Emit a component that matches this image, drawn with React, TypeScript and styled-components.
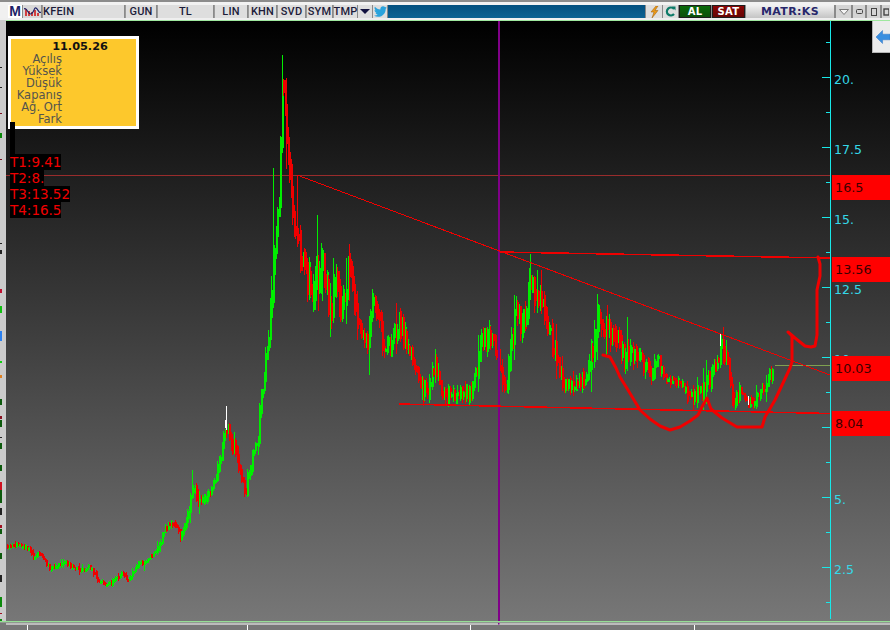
import React from "react";
import styled, { createGlobalStyle } from "styled-components";
import { FaTwitter } from "react-icons/fa";

const GlobalStyle = createGlobalStyle`
  html, body {
    margin: 0;
    padding: 0;
    width: 890px;
    height: 630px;
    overflow: hidden;
    background: #777;
  }
`;

const Page = styled.div`
  width: 890px;
  height: 630px;
  display: flex;
  flex-direction: column;
  overflow: hidden;
`;

const TopStrip = styled.div`
  height: 3px;
  flex: none;
  background: #f2f2f2;
  border-top: 2px solid #8c8c8c;
`;

const Toolbar = styled.div`
  height: 13px;
  flex: none;
  display: flex;
  align-items: stretch;
  gap: 1px;
  padding-left: 8px;
  background: #8a8a8a;
  box-shadow: inset 8px 0 0 #f0f0f0;
`;

const ToolButton = styled.div<{ $w: number; $left?: boolean }>`
  width: ${(p) => p.$w}px;
  flex: none;
  display: flex;
  align-items: center;
  justify-content: ${(p) => (p.$left ? "flex-start" : "center")};
  box-sizing: border-box;
  background: #dedede;
  border-left: 1px solid #9a9a9a;
  color: #1c1c3a;
  font: 500 11px/13px Roboto, "Liberation Sans", sans-serif;
  letter-spacing: 0.2px;
`;

const LogoButton = styled.div`
  width: 14px;
  flex: none;
  background: #fff;
  color: #1c1f66;
  font: 700 14px/13px "Liberation Sans", sans-serif;
  text-align: center;
`;

const IconButton = styled.div<{ $w: number; $bg?: string }>`
  width: ${(p) => p.$w}px;
  flex: none;
  display: flex;
  align-items: center;
  justify-content: center;
  background: ${(p) => p.$bg ?? "#dedede"};
  svg {
    display: block;
  }
`;

const NewsStrip = styled.div`
  flex: 1;
  background: linear-gradient(#04507f, #0b6293);
`;

const TradeButton = styled.div<{ $w: number; $bg: string }>`
  width: ${(p) => p.$w}px;
  flex: none;
  background: ${(p) => p.$bg};
  border: 1px solid #1d1d1d;
  box-sizing: border-box;
  color: #fff;
  font: 700 10px/11px "DejaVu Sans", sans-serif;
  letter-spacing: 0.3px;
  text-align: center;
`;

const Brand = styled.div`
  width: 88px;
  flex: none;
  background: linear-gradient(#f2f2f2, #c4c4c4);
  color: #27276b;
  font: 700 11px/13px "DejaVu Sans", sans-serif;
  letter-spacing: 0.4px;
  text-align: center;
`;

const WindowButton = styled.div<{ $w: number }>`
  width: ${(p) => p.$w}px;
  flex: none;
  display: flex;
  align-items: center;
  justify-content: center;
  background: #d4d4d4;
  border-left: 1px solid #8a8a8a;
  box-sizing: border-box;
`;

const UnderStrip = styled.div`
  height: 2px;
  flex: none;
  background: #efefef;
`;

const Body = styled.div`
  height: 601px;
  flex: none;
  display: flex;
`;

const LeftRail = styled.svg`
  width: 6px;
  height: 601px;
  flex: none;
  display: block;
  background: #cbcbcb;
`;

const ChartArea = styled.div`
  position: relative;
  width: 884px;
  height: 601px;
  flex: none;
  background: linear-gradient(#000 0%, #777 100%);
  border-top: 1px solid #9fe89f;
  box-sizing: border-box;
`;

const ChartSvg = styled.svg`
  display: block;
  width: 884px;
  height: 600px;
`;

const InfoPanel = styled.div`
  position: absolute;
  left: 2px;
  top: 15px;
  width: 131px;
  height: 93px;
  box-sizing: border-box;
  border: 3px solid #fff;
  background: #fdc82c;
  padding-top: 1px;
`;

const InfoDate = styled.div`
  font: 700 11.3px/13px "DejaVu Sans", sans-serif;
  color: #111;
  text-align: center;
  padding-left: 13px;
`;

const InfoLabel = styled.div`
  width: 51px;
  font: 11.5px/12px "DejaVu Sans", sans-serif;
  color: #54544c;
  text-align: right;
`;

const LegendStack = styled.div`
  position: absolute;
  left: 4px;
  top: 101px;
  display: flex;
  flex-direction: column;
  align-items: flex-start;
`;

const LegendStem = styled.div`
  width: 5px;
  height: 32px;
  background: #000;
`;

const LegendRow = styled.div`
  background: #000;
  color: #f00000;
  font: 13.5px/16px "DejaVu Sans", sans-serif;
  white-space: nowrap;
`;

const SidePanel = styled.div`
  position: absolute;
  right: 0;
  top: 0;
  width: 18px;
  height: 32px;
  background: #ececec;
  border-left: 1px solid #b5b5b5;
  border-bottom: 1px solid #b5b5b5;
  box-sizing: border-box;
  display: flex;
  align-items: center;
  padding-left: 3px;
`;

const BottomGap = styled.div`
  height: 2px;
  flex: none;
  background: #8f9a8f;
  box-shadow: inset 0 1px 0 #95df95;
`;

const TimeAxis = styled.svg`
  width: 890px;
  height: 7px;
  flex: none;
  display: block;
  background: #777;
`;

type Anchor = [number, number, number];

// x, y, how noisy the bars are around that point
const anchors: Anchor[] = [
  [7, 546, 4], [20, 546, 4], [27, 548, 4], [33, 558, 4], [38, 553, 4], [45, 563, 4], [50, 569, 4], [65, 561, 4], [70, 566, 4],
  [83, 571, 4], [87, 566, 4], [98, 580, 4], [105, 585, 4], [112, 582, 4], [122, 573, 4], [128, 580, 4], [137, 563, 4], [143, 563, 4],
  [157, 549, 5], [163, 530, 6], [170, 520, 8], [180, 537, 8], [187, 517, 8], [192, 490, 10], [202, 503, 10], [212, 488, 10],
  [220, 457, 10], [223, 436, 12], [227, 426, 12], [232, 445, 12], [245, 490, 12], [252, 453, 12], [257, 443, 12], [260, 400, 14],
  [268, 343, 14], [272, 270, 16], [278, 207, 20], [280, 150, 20], [282, 75, 20], [285, 117, 22], [288, 160, 22], [292, 210, 24],
  [297, 240, 24], [303, 263, 24], [313, 295, 28], [320, 262, 32], [330, 313, 28], [335, 283, 28], [342, 312, 24], [349, 262, 28],
  [357, 330, 18], [367, 337, 16], [373, 292, 26], [382, 342, 18], [388, 347, 14], [400, 327, 24], [410, 353, 20], [422, 393, 10],
  [435, 368, 20], [443, 397, 10], [460, 393, 12], [470, 393, 12], [483, 337, 20], [493, 343, 20], [505, 387, 14], [516, 303, 24],
  [522, 333, 26], [530, 277, 26], [543, 310, 20], [557, 363, 20], [563, 383, 12], [577, 383, 12], [587, 377, 12], [598, 320, 24],
  [610, 330, 26], [625, 363, 20], [630, 353, 22], [643, 363, 16], [650, 370, 12], [658, 363, 16], [663, 377, 10], [680, 383, 8],
  [690, 400, 8], [703, 390, 12], [718, 357, 14], [720, 345, 14], [727, 363, 16], [732, 400, 12], [740, 393, 12], [748, 405, 6],
  [760, 393, 10], [772, 372, 10],
];

const rng = (seed: number) => () => {
  seed = (seed + 0x6d2b79f5) | 0;
  let t = Math.imul(seed ^ (seed >>> 15), 1 | seed);
  t = (t + Math.imul(t ^ (t >>> 7), 61 | t)) ^ t;
  return ((t ^ (t >>> 14)) >>> 0) / 4294967296;
};

const at = (x: number): [number, number] => {
  for (let i = 1; i < anchors.length; i++) {
    const [x1, y1, a1] = anchors[i];
    const [x0, y0] = anchors[i - 1];
    if (x <= x1) {
      return [y0 + ((y1 - y0) * (x - x0)) / (x1 - x0), a1];
    }
  }
  return [372, 6];
};

type Bar = { x: number; top: number; bottom: number; hi: number; lo: number; color: string };

const buildBars = () => {
  const rand = rng(41);
  const bars: Bar[] = [];
  let prev = 546;
  for (let x = 7; x <= 773; x += 1.5) {
    const [y, amp] = at(x);
    const close = y + (rand() - 0.5) * amp;
    const grow = rand() * amp * 0.4;
    const top = Math.round(Math.min(prev, close) - grow);
    const bottom = Math.round(Math.max(prev, close) + grow);
    const wick = rand() < 0.15 ? 1.2 : 0.3;
    bars.push({
      x: Math.round(x),
      top,
      bottom: Math.max(bottom, top + 3),
      hi: Math.round(top - rand() * amp * wick),
      lo: Math.round(bottom + rand() * amp * wick),
      color: close > prev ? "#f00000" : "#00ee00",
    });
    prev = close;
  }
  return bars;
};

const bars = buildBars();

const spikes: [number, number, number, string][] = [
  [282, 55, 95, "#00ee00"],
  [226, 406, 430, "#ffffff"],
  [225, 420, 428, "#ffffff"],
  [720, 333, 346, "#ffffff"],
  [748, 396, 405, "#ffffff"],
  [317, 215, 270, "#00ee00"],
  [530, 254, 280, "#00ee00"],
  [422, 376, 400, "#00ee00"],
  [192, 470, 490, "#00ee00"],
  [273, 168, 300, "#00ee00"],
  [297, 175, 245, "#f00000"],
];

const cupPath =
  "M603 355 L610 357 L616 368 L620 377 L628 390 L640 410 L650 419 L660 426 L670 430 L680 427 L690 421 L698 415 L703 405 L707 398 L711 409 L722 418 L737 427 L762 427 L765 417 L775 400 L783 383 L790 368 L792 362 L792 336 L788 332 L795 338 L805 346 L811 347 L815 346 L817 335 L817 290 L820 276 L820 264 L818 257";

const majors: [number, string][] = [
  [77, "20."], [147, "17.5"], [217, "15."], [287, "12.5"], [357, "10."], [427, ""], [497, "5."], [567, "2.5"],
];
const minors = [42, 112, 182, 252, 322, 392, 462, 532, 602];
const priceBoxes: [number, string][] = [[175, "16.5"], [257, "13.56"], [356, "10.03"], [411, "8.04"]];

const railMarks: [number, number, string][] = [
  [67, 1, "#222"], [87, 1, "#222"], [113, 1, "#7a1020"], [133, 5, "#0a8a0a"], [159, 1, "#7a1020"], [243, 1, "#222"], [250, 4, "#222"],
  [289, 4, "#c01030"], [306, 7, "#10c010"], [331, 10, "#2a80f0"], [361, 2, "#10d010"], [375, 3, "#e08020"], [399, 6, "#0c5a0c"],
  [416, 3, "#8a1020"], [420, 7, "#0c5a0c"], [437, 1, "#222"], [443, 6, "#0c5a0c"], [465, 6, "#0c5a0c"], [482, 8, "#d01020"],
  [490, 13, "#0c5a0c"], [508, 7, "#222"], [525, 3, "#a01020"], [529, 5, "#0c5a0c"], [553, 6, "#0c5a0c"], [575, 7, "#222"],
  [597, 10, "#0c8a0c"], [613, 1, "#a01020"], [619, 10, "#0c8a0c"],
];

const App = () => (
  <Page>
    <GlobalStyle />
    <TopStrip />
    <Toolbar>
      <LogoButton>M</LogoButton>
      <IconButton $w={18} $bg="#d8d8d8">
        <svg width="17" height="12" viewBox="0 0 17 12">
          <path d="M2 3v7M5 5v5M8 6v4M11 4v6M14 7v3" stroke="#d01818" strokeWidth="1.6" />
          <path d="M0 3 C3 1 4 9 7 8 S10 1 12 2 S15 8 17 6" stroke="#1c1f66" strokeWidth="1.1" fill="none" />
        </svg>
      </IconButton>
      <ToolButton $w={82} $left>KFEIN</ToolButton>
      <ToolButton $w={31}>GUN</ToolButton>
      <ToolButton $w={56}>TL</ToolButton>
      <ToolButton $w={33}>LIN</ToolButton>
      <ToolButton $w={28}>KHN</ToolButton>
      <ToolButton $w={28}>SVD</ToolButton>
      <ToolButton $w={26}>SYM</ToolButton>
      <ToolButton $w={24}>TMP</ToolButton>
      <IconButton $w={14}>
        <svg width="10" height="5" viewBox="0 0 10 5">
          <path d="M0 0h10L5 5z" fill="#12123f" />
        </svg>
      </IconButton>
      <IconButton $w={14}>
        <FaTwitter size={13} color="#2aa3dc" />
      </IconButton>
      <NewsStrip />
      <IconButton $w={16}>
        <svg width="9" height="12" viewBox="0 0 9 12">
          <path d="M6 0 L1 6 H4 L2 12 L8 4.5 H5 L8 0z" fill="#eb9a18" stroke="#9a5a08" strokeWidth="0.5" />
        </svg>
      </IconButton>
      <IconButton $w={15}>
        <svg width="11" height="11" viewBox="0 0 11 11">
          <path d="M9 3 A4 4 0 1 0 9 8" fill="none" stroke="#0d7a68" strokeWidth="2.2" />
          <path d="M7 0.5 L10.5 0.5 L10.5 4.5z" fill="#0d7a68" />
        </svg>
      </IconButton>
      <TradeButton $w={32} $bg="linear-gradient(#0a6a0a, #0a4f0a)">AL</TradeButton>
      <TradeButton $w={33} $bg="linear-gradient(#8a0505, #650404)">SAT</TradeButton>
      <Brand>MATR:KS</Brand>
      <WindowButton $w={16}>
        <svg width="10" height="6" viewBox="0 0 10 6">
          <path d="M0.5 0.5h9L5 5.5z" fill="#f4f4f4" stroke="#777" />
        </svg>
      </WindowButton>
      <WindowButton $w={13}>
        <svg width="7" height="5" viewBox="0 0 7 5">
          <rect x="0.5" y="0.5" width="6" height="4" rx="1" fill="none" stroke="#444" />
        </svg>
      </WindowButton>
      <WindowButton $w={14}>
        <svg width="6" height="8" viewBox="0 0 6 8">
          <rect x="0.5" y="0.5" width="5" height="7" fill="none" stroke="#444" />
        </svg>
      </WindowButton>
      <WindowButton $w={9}>
        <svg width="6" height="8" viewBox="0 0 6 8">
          <rect x="1" y="1" width="5" height="6" fill="none" stroke="#444" strokeWidth="1.4" />
        </svg>
      </WindowButton>
    </Toolbar>
    <UnderStrip />
    <Body>
      <LeftRail viewBox="0 20 6 601">
        {railMarks.map(([y, h, color]) => (
          <rect key={y} x="0" y={y} width="2" height={h} fill={color} />
        ))}
      </LeftRail>
      <ChartArea>
        <ChartSvg viewBox="6 21 884 600" shapeRendering="crispEdges">
          <line x1="6" y1="175.5" x2="830" y2="175.5" stroke="#b83030" strokeOpacity="0.8" />
          {bars.map((b, i) => (
            <g key={i} fill={b.color}>
              <rect x={b.x} y={b.hi} width="1" height={b.lo - b.hi} />
              <rect x={b.x} y={b.top} width="2" height={b.bottom - b.top} />
            </g>
          ))}
          {spikes.map(([x, y1, y2, color]) => (
            <rect key={`${x}-${y1}`} x={x} y={y1} width="1.4" height={y2 - y1} fill={color} />
          ))}
          <rect x="498" y="21" width="1.5" height="603" fill="#800088" />
          <path d="M775 365.5H830" stroke="#7fa050" strokeWidth="1" />
          <g fill="none" stroke="#f00000">
            <path d="M297 175 L830 375" strokeWidth="1" />
            <path d="M500 252 L830 258" strokeWidth="1.5" />
            <path d="M399 404 L830 413.5" strokeWidth="1.5" />
            <path d={cupPath} strokeWidth="3" strokeLinejoin="round" strokeLinecap="round" shapeRendering="auto" />
          </g>
          <rect x="829.5" y="21" width="1.2" height="598" fill="#18e8e8" />
          {majors.map(([y, label]) => (
            <g key={y}>
              <rect x="822" y={y} width="8" height="1" fill="#18e8e8" />
              <text x="834" y={y + 7} fill="#35d8e8" fontFamily="DejaVu Sans" fontSize="12.5">
                {label}
              </text>
            </g>
          ))}
          {minors.map((y) => (
            <rect key={y} x="826" y={y} width="4" height="1" fill="#18e8e8" />
          ))}
          {priceBoxes.map(([y, label]) => (
            <g key={y}>
              <rect x="831.5" y={y} width="59" height="25" fill="#ff0000" />
              <text x="835" y={y + 17} fill="#3c0000" fontFamily="DejaVu Sans" fontSize="12.8">
                {label}
              </text>
            </g>
          ))}
        </ChartSvg>
        <InfoPanel>
          <InfoDate>11.05.26</InfoDate>
          {["Açılış", "Yüksek", "Düşük", "Kapanış", "Ağ. Ort", "Fark"].map((label) => (
            <InfoLabel key={label}>{label}</InfoLabel>
          ))}
        </InfoPanel>
        <LegendStack>
          <LegendStem />
          {["T1:9.41", "T2:8.", "T3:13.52", "T4:16.5"].map((label) => (
            <LegendRow key={label}>{label}</LegendRow>
          ))}
        </LegendStack>
        <SidePanel>
          <svg width="15" height="14" viewBox="0 0 15 14">
            <path d="M0 7 L7 0 V4 H15 V10 H7 V14z" fill="#3a8fe0" stroke="#2a6fc0" strokeWidth="0.5" />
          </svg>
        </SidePanel>
      </ChartArea>
    </Body>
    <BottomGap />
    <TimeAxis viewBox="0 623 890 7">
      <rect x="6" y="623.5" width="884" height="1" fill="#fff" />
      <rect x="498" y="623" width="1.5" height="1.5" fill="#800088" />
      {[27, 247, 470, 694].map((x) => (
        <rect key={x} x={x} y="625" width="1" height="5" fill="#fff" />
      ))}
    </TimeAxis>
  </Page>
);

export default App;
